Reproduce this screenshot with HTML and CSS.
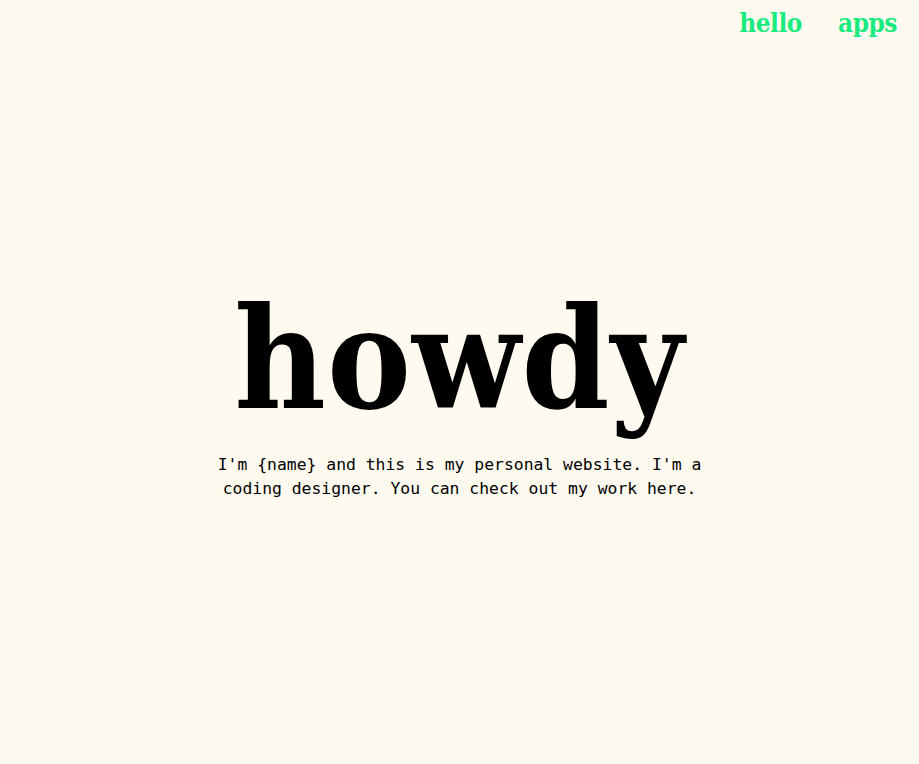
FILE: index.html
```html
<!DOCTYPE html>
<html>
<head>
<meta charset="utf-8">
<link rel="stylesheet" href="styles.css">
</head>
<body>
<nav class="nav">
  <a class="nav-link" href="#">hello</a>
  <a class="nav-link" href="#">apps</a>
</nav>
<main class="hero">
  <h1 class="title">howdy</h1>
  <p class="intro">I'm {name} and this is my personal website. I'm a coding designer. You can check out my work here.</p>
</main>
</body>
</html>
```
FILE: styles.css
```css
html, body {
  margin: 0;
  padding: 0;
  background: #fffaf0;
  height: 100%;
}
body {
  display: flex;
  flex-direction: column;
}
.nav {
  display: flex;
  justify-content: flex-end;
  gap: 36px;
  padding: 8px 22px 0 0;
}
.nav-link {
  font-family: "DejaVu Serif Condensed", "DejaVu Serif", serif;
  font-weight: bold;
  font-size: 26px;
  color: #1aeb7e;
  text-decoration: none;
  letter-spacing: -0.5px;
}
.hero {
  flex: 1;
  display: flex;
  flex-direction: column;
  align-items: center;
  justify-content: center;
  padding-bottom: 12px;
}
.title {
  margin: 0;
  font-family: "DejaVu Serif Condensed", "DejaVu Serif", serif;
  font-weight: bold;
  font-size: 140px;
  line-height: 1;
  color: #000;
  letter-spacing: 1px;
}
.intro {
  margin: 24px 0 0;
  width: 500px;
  text-align: center;
  font-family: "DejaVu Sans Mono", monospace;
  font-size: 16.4px;
  line-height: 24px;
  color: #000;
}
```
